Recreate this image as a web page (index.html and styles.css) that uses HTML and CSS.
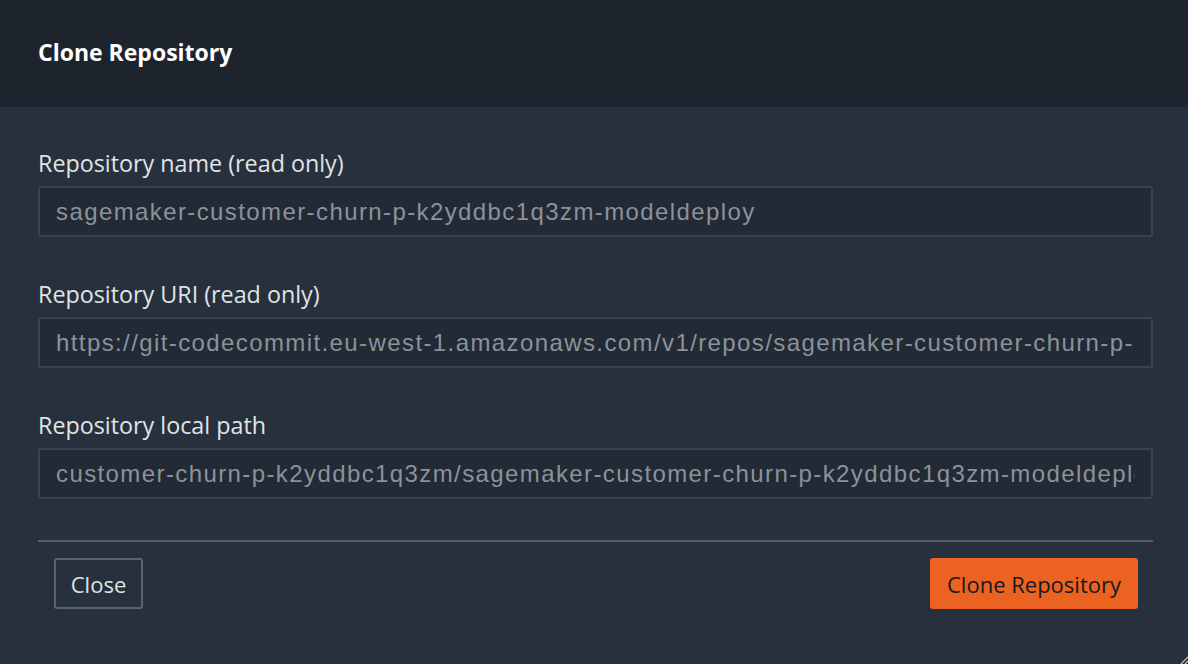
FILE: index.html
```html
<!DOCTYPE html>
<html>
<head>
<meta charset="utf-8">
<link rel="stylesheet" href="styles.css">
</head>
<body>
<div class="dialog">
  <header class="dialog-header">
    <h1 class="dialog-title">Clone Repository</h1>
  </header>
  <main class="dialog-body">
    <div class="fields">
      <div class="field">
        <label class="field-label">Repository name (read only)</label>
        <div class="field-input"><span class="field-value">sagemaker-customer-churn-p-k2yddbc1q3zm-modeldeploy</span></div>
      </div>
      <div class="field">
        <label class="field-label">Repository URI (read only)</label>
        <div class="field-input"><span class="field-value">https://git-codecommit.eu-west-1.amazonaws.com/v1/repos/sagemaker-customer-churn-p-k2yddbc1q3zm-modeldeploy</span></div>
      </div>
      <div class="field">
        <label class="field-label">Repository local path</label>
        <div class="field-input"><span class="field-value">customer-churn-p-k2yddbc1q3zm/sagemaker-customer-churn-p-k2yddbc1q3zm-modeldeploy</span></div>
      </div>
    </div>
    <div class="dialog-footer">
      <button class="btn btn-secondary">Close</button>
      <button class="btn btn-primary">Clone Repository</button>
    </div>
  </main>
  <svg class="resize-handle" width="8" height="8" viewBox="0 0 8 8"><path d="M8 1 L1 8 M8 5 L5 8" stroke="#c5c9ce" stroke-width="1.2"/></svg>
</div>
</body>
</html>
```

FILE: styles.css
```css
html, body {
  margin: 0;
  padding: 0;
  height: 100%;
  background: #27313d;
}
.dialog {
  position: relative;
  width: 1188px;
  height: 664px;
  display: flex;
  flex-direction: column;
  font-family: "Open Sans", "Noto Sans", sans-serif;
}
.dialog-header {
  height: 107px;
  background: #1d242e;
  display: flex;
  align-items: center;
  padding: 0 38px;
  box-sizing: border-box;
  flex-shrink: 0;
}
.dialog-title {
  margin: 0 0 3px 0;
  font-size: 23px;
  font-weight: 700;
  color: #ffffff;
}
.dialog-body {
  flex: 1;
  padding: 42px 35px 0 38px;
  display: flex;
  flex-direction: column;
}
.fields {
  display: flex;
  flex-direction: column;
  gap: 43px;
}
.field {
  display: flex;
  flex-direction: column;
}
.field-label {
  font-size: 23.3px;
  line-height: 28px;
  color: #e1e3e6;
  margin-bottom: 9px;
}
.field-input {
  height: 51px;
  box-sizing: border-box;
  border: 2px solid #39424d;
  border-radius: 3px;
  background: #222a35;
  padding: 0 16px;
  display: flex;
  align-items: center;
}
.field-value {
  flex: 1;
  min-width: 0;
  font-family: "Liberation Sans", Arial, sans-serif;
  font-size: 24px;
  line-height: 30px;
  letter-spacing: 1.4px;
  color: #8b929b;
  white-space: nowrap;
  overflow: hidden;
}
.dialog-footer {
  border-top: 2px solid #595e65;
  margin-top: 41px;
  padding: 16px 15px 0 16px;
  display: flex;
  justify-content: space-between;
}
.btn {
  height: 51px;
  box-sizing: border-box;
  border-radius: 3px;
  font-family: "Open Sans", "Noto Sans", sans-serif;
  font-size: 22px;
  padding: 0;
}
.btn-secondary {
  background: transparent;
  border: 2px solid #5f6368;
  color: #dfe2e6;
  width: 89px;
}
.btn-primary {
  background: #ec6221;
  border: none;
  color: #16191f;
  width: 208px;
}
.resize-handle {
  position: absolute;
  right: 0;
  bottom: 0;
}
```
